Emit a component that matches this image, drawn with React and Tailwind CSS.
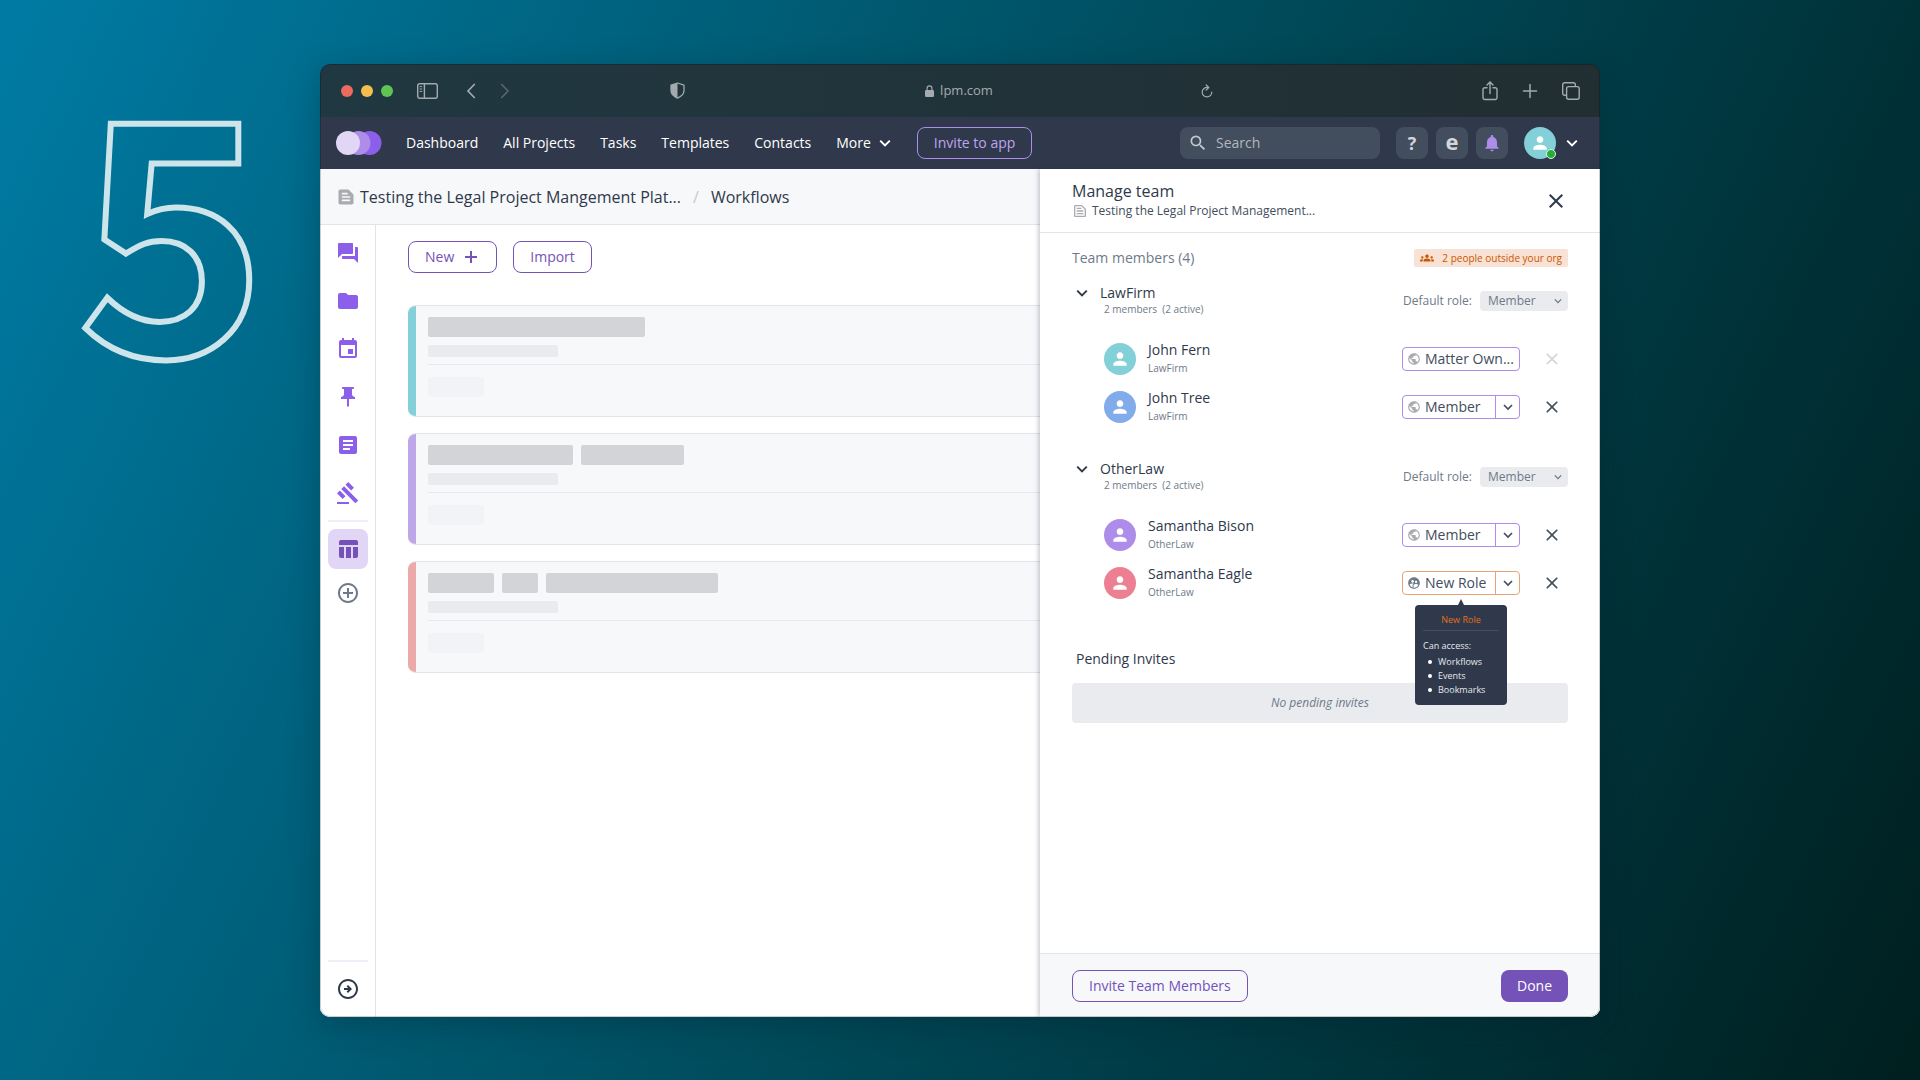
import React, { useState } from "react";
import {
  MdAddCircleOutline,
  MdArticle,
  MdClose,
  MdEvent,
  MdFolder,
  MdForum,
  MdGavel,
  MdGroups,
  MdNotifications,
  MdOutlineArrowCircleRight,
  MdOutlineTextSnippet,
  MdPerson,
  MdPublic,
  MdPushPin,
  MdSearch,
  MdSupervisedUserCircle,
  MdTableChart,
  MdTextSnippet,
} from "react-icons/md";

const navLinks = ["Dashboard", "All Projects", "Tasks", "Templates", "Contacts"];

const sideItems = [
  { name: "Messages", Icon: MdForum },
  { name: "Files", Icon: MdFolder },
  { name: "Events", Icon: MdEvent },
  { name: "Bookmarks", Icon: MdPushPin },
  { name: "Notes", Icon: MdArticle },
  { name: "Matters", Icon: MdGavel },
];

const cards = [
  { id: 1, accent: "bg-[#83d0d8]", bars: [217] },
  { id: 2, accent: "bg-[#bea7e8]", bars: [145, 103] },
  { id: 3, accent: "bg-[#eba9a9]", bars: [66, 36, 172] },
];

const groups = [
  {
    org: "LawFirm",
    members: [
      { name: "John Fern", color: "bg-[#83d0d8]", role: "Matter Own...", locked: true },
      { name: "John Tree", color: "bg-[#82abea]", role: "Member" },
    ],
  },
  {
    org: "OtherLaw",
    members: [
      { name: "Samantha Bison", color: "bg-[#ae8cea]", role: "Member" },
      { name: "Samantha Eagle", color: "bg-[#ed7f92]", role: "New Role", custom: true },
    ],
  },
];

const Chevron = ({ className, width = 2 }) => (
  <svg viewBox="0 0 12 12" className={className} fill="none" stroke="currentColor" strokeWidth={width} aria-hidden="true">
    <path d="M1.2 3.6 6 8.4l4.8-4.8" />
  </svg>
);

const TitleBar = () => (
  <div className="flex h-[53px] items-center bg-linear-to-r from-[#203841] to-[#212e32] px-5 text-[#a3abae]">
    <div className="flex gap-2 pl-px">
      <span className="size-3 rounded-full bg-[#ec6a5e]" />
      <span className="size-3 rounded-full bg-[#f4bf4f]" />
      <span className="size-3 rounded-full bg-[#61c554]" />
    </div>
    <svg viewBox="0 0 21 16" className="ml-6 h-4 w-[21px]" fill="none" stroke="currentColor" strokeWidth="1.4" aria-hidden="true">
      <rect x="0.7" y="0.7" width="19.6" height="14.6" rx="2" />
      <path d="M7.4.7v14.6" />
      <path d="M2.6 3.6h2.6M2.6 6h2.6M2.6 8.4h2.6" strokeWidth="1" />
    </svg>
    <svg viewBox="0 0 10 16" className="ml-7 h-4 w-2.5" fill="none" stroke="currentColor" strokeWidth="1.7" strokeLinecap="round" aria-hidden="true">
      <path d="M8.3 1.5 2 8l6.3 6.5" />
    </svg>
    <svg viewBox="0 0 10 16" className="ml-6 h-4 w-2.5 text-[#56656a]" fill="none" stroke="currentColor" strokeWidth="1.7" strokeLinecap="round" aria-hidden="true">
      <path d="M1.7 1.5 8 8l-6.3 6.5" />
    </svg>

    <div className="ml-40 flex w-[543px] items-center justify-between">
      <svg viewBox="0 0 15 17" className="h-[17px] w-[15px]" aria-hidden="true">
        <path d="M7.5 1 14 3.2v5.3c0 3.4-2.6 5.9-6.5 7.6C3.6 14.4 1 11.9 1 8.5V3.2z" fill="none" stroke="currentColor" strokeWidth="1.3" strokeLinejoin="round" />
        <path d="M7.5 1v15.1C3.6 14.4 1 11.9 1 8.5V3.2z" fill="currentColor" />
      </svg>
      <div className="flex items-center gap-1.5 pl-8 text-[13px]">
        <svg viewBox="0 0 9 12" className="h-3 w-[9px]" aria-hidden="true">
          <rect x="0" y="5" width="9" height="7" rx="1.2" fill="currentColor" />
          <path d="M2.1 5.5V3.3a2.4 2.4 0 0 1 4.8 0v2.2" fill="none" stroke="currentColor" strokeWidth="1.2" />
        </svg>
        lpm.com
      </div>
      <svg viewBox="0 0 12 14" className="h-3.5 w-3" fill="none" stroke="currentColor" strokeWidth="1.2" strokeLinecap="round" aria-hidden="true">
        <path d="M6.6 3.4A4.8 4.8 0 1 0 10.8 8.2" />
        <path d="M5.2 1l2.6 2.5L5.2 6" />
      </svg>
    </div>

    <div className="ml-auto flex items-center gap-6">
      <svg viewBox="0 0 16 20" className="h-5 w-4" fill="none" stroke="currentColor" strokeWidth="1.4" strokeLinecap="round" aria-hidden="true">
        <path d="M5 6.8H2.7A1.7 1.7 0 0 0 1 8.5v8.3a1.7 1.7 0 0 0 1.7 1.7h10.6a1.7 1.7 0 0 0 1.7-1.7V8.5a1.7 1.7 0 0 0-1.7-1.7H11" />
        <path d="M8 12.5V1.2M5 4l3-3 3 3" />
      </svg>
      <svg viewBox="0 0 16 16" className="size-4" fill="none" stroke="currentColor" strokeWidth="1.5" strokeLinecap="round" aria-hidden="true">
        <path d="M8 1.5v13M1.5 8h13" />
      </svg>
      <svg viewBox="0 0 18 18" className="size-[18px]" fill="none" stroke="currentColor" strokeWidth="1.4" aria-hidden="true">
        <rect x="4.6" y="4.6" width="12.6" height="12.6" rx="2" />
        <path d="M4.6 13.3H2.7a2 2 0 0 1-2-2V2.7a2 2 0 0 1 2-2h8.6a2 2 0 0 1 2 2v1.9" />
      </svg>
    </div>
  </div>
);

const NavBar = () => (
  <header className="flex h-[52px] items-center bg-[#2f394b] px-4 text-sm font-medium text-white">
    <svg viewBox="0 0 46 24" className="h-6 w-[46px]" aria-hidden="true">
      <circle cx="33.5" cy="12" r="12" fill="#8c5feb" />
      <circle cx="22.5" cy="12" r="12" fill="#ae8cea" />
      <circle cx="12" cy="12" r="12" fill="#e1d6f5" />
    </svg>
    <nav className="ml-6 flex items-center gap-[25px]">
      {navLinks.map((link) => (
        <a key={link} href="#">{link}</a>
      ))}
      <button className="flex items-center gap-2">
        More
        <Chevron className="size-3" />
      </button>
    </nav>
    <button className="ml-[26px] h-8 rounded-lg border border-[#ae8cea] px-4 text-[#bfa5ef]">Invite to app</button>

    <div className="ml-auto flex items-center gap-2">
      <label className="mr-2 flex h-8 w-[200px] items-center gap-2 rounded-lg bg-[#424d5d] px-2 text-[#c5c9ce]">
        <MdSearch size={20} className="shrink-0" />
        <input type="search" aria-label="Search" placeholder="Search" className="w-full bg-transparent font-normal outline-none placeholder:text-[#b3b8bf]" />
      </label>
      <button aria-label="Help" className="size-8 rounded-lg bg-[#424d5d] text-lg leading-none font-bold text-[#d3d5d9]">?</button>
      <button aria-label="Editor" className="size-8 rounded-lg bg-[#424d5d] pb-1 text-[22px] leading-none font-bold text-[#d3d5d9]">e</button>
      <button aria-label="Notifications" className="flex size-8 items-center justify-center rounded-lg bg-[#424d5d] text-[#ae8cea]">
        <MdNotifications size={20} />
      </button>
      <button aria-label="Account" className="ml-2 flex items-center gap-2.5 pr-1.5">
        <span className="relative flex size-8 items-center justify-center rounded-full bg-[#83d0d8]">
          <MdPerson size={20} />
          <span className="absolute right-0 bottom-0 size-2.5 rounded-full border border-[#dff2f2] bg-[#27ae34]" />
        </span>
        <Chevron className="size-3" />
      </button>
    </div>
  </header>
);

const SideBar = () => (
  <aside className="flex w-14 shrink-0 flex-col items-center border-r border-[#e1e4e9] bg-white pt-4 pb-4 text-[#8c5feb]">
    <div className="flex flex-col gap-6">
      {sideItems.map(({ name, Icon }) => (
        <a key={name} href="#" aria-label={name}>
          <Icon size={24} />
        </a>
      ))}
    </div>
    <hr className="mt-[15px] w-10 border-t-2 border-[#f0eff8]" />
    <a href="#" aria-label="Workflows" className="mt-[7px] flex size-10 items-center justify-center rounded-lg bg-[#e1d6f5] text-[#7452b8]">
      <MdTableChart size={24} />
    </a>
    <button aria-label="Add section" className="mt-3 text-[#6e7a89]">
      <MdAddCircleOutline size={24} />
    </button>
    <hr className="mt-auto w-10 border-t-2 border-[#f0eff8]" />
    <button aria-label="Expand menu" className="mt-[15px] text-[#2f394b]">
      <MdOutlineArrowCircleRight size={24} />
    </button>
  </aside>
);

const SkeletonCard = ({ accent, bars }) => (
  <article className="flex h-28 overflow-hidden rounded-l-lg border-y border-[#e1e4e9] bg-[#f7f8fa]">
    <div className={`-my-px w-2 ${accent}`} />
    <div className="flex-1 pt-[11px] pl-3">
      <div className="flex gap-2">
        {bars.map((w) => (
          <div key={w} className="h-5 rounded-xs bg-[#d3d4d8]" style={{ width: w }} />
        ))}
      </div>
      <div className="mt-2 h-3 w-[130px] rounded-xs bg-[#eaebef]" />
      <div className="mt-[7px] border-t border-[#e7e9ed]" />
      <div className="mt-3 h-5 w-14 rounded-sm bg-[#f2f3f7]" />
    </div>
  </article>
);

const access = ["Workflows", "Events", "Bookmarks"];

const RoleTooltip = () => (
  <div role="tooltip" className="absolute top-full left-3 z-10 mt-[11px] w-[92px] rounded-sm bg-[#2f394b] p-2 text-[9px] leading-[14px] text-[#e6e8ec]">
    <span className="absolute -top-1.5 left-1/2 -ml-1 border-x-4 border-b-8 border-x-transparent border-b-[#2f394b]" />
    <p className="border-b border-[#424d5d] pb-[3px] text-center text-[#e2701c]">New Role</p>
    <p className="mt-2">Can access:</p>
    <ul className="mt-0.5 pl-[5px]">
      {access.map((item) => (
        <li key={item} className="flex items-center gap-1.5 before:size-1 before:rounded-full before:bg-white">
          {item}
        </li>
      ))}
    </ul>
  </div>
);

const RolePicker = ({ member }) => {
  const [role, setRole] = useState(member.role);
  const border = member.custom ? "border-[#e8a474]" : "border-[#ae8cea]";

  if (member.locked) {
    return (
      <button className={`flex h-6 w-[118px] items-center gap-1 rounded border ${border} pl-1 text-sm font-medium whitespace-nowrap text-[#424d5d]`}>
        <MdPublic size={14} className="shrink-0 text-[#a9abaf]" />
        {member.role}
      </button>
    );
  }

  return (
    <div className={`relative flex h-6 w-[118px] items-center rounded border ${border} text-[#424d5d]`}>
      {member.custom ? (
        <MdSupervisedUserCircle size={14} className="ml-1 shrink-0 text-[#6e7a89]" />
      ) : (
        <MdPublic size={14} className="ml-1 shrink-0 text-[#a9abaf]" />
      )}
      <select
        aria-label={`Role of ${member.name}`}
        value={role}
        onChange={(e) => setRole(e.target.value)}
        className="h-full min-w-0 flex-1 appearance-none bg-transparent pl-1 text-sm font-medium outline-none"
      >
        <option>Member</option>
        <option>New Role</option>
      </select>
      <span className={`pointer-events-none flex h-full w-6 shrink-0 items-center justify-center border-l ${border}`}>
        <Chevron className="size-2.5" />
      </span>
      {member.custom && <RoleTooltip />}
    </div>
  );
};

const MemberRow = ({ member, org }) => (
  <li className="flex h-8 items-center">
    <span className={`flex size-8 items-center justify-center rounded-full text-white ${member.color}`}>
      <MdPerson size={20} />
    </span>
    <div className="ml-3">
      <p className="text-sm leading-5 font-medium">{member.name}</p>
      <p className="pb-0.5 text-[10px] leading-4 text-[#6e7a89]">{org}</p>
    </div>
    <div className="ml-auto flex items-center gap-[22px] pr-1.5">
      <RolePicker member={member} />
      <button aria-label={`Remove ${member.name}`} disabled={member.locked} className="text-[#424d5d] disabled:text-[#d3d4d8]">
        <MdClose size={20} />
      </button>
    </div>
  </li>
);

const OrgGroup = ({ org, members }) => {
  const id = `default-role-${org}`;
  return (
    <section>
      <div className="flex h-9 items-center">
        <button aria-label={`Collapse ${org}`} className="ml-1 self-start pt-1">
          <Chevron className="size-3" />
        </button>
        <div className="ml-3 self-start">
          <h3 className="text-sm leading-5 font-medium">{org}</h3>
          <p className="pl-1 text-[10px] leading-3 text-[#6e7a89]">2 members &nbsp;(2 active)</p>
        </div>
        <label htmlFor={id} className="ml-auto text-xs text-[#6e7a89]">Default role:</label>
        <span className="relative ml-2 h-5 w-[88px] text-[#6e7a89]">
          <select id={id} defaultValue="Member" className="block h-5 w-full appearance-none rounded bg-[#eaebef] pl-2 text-xs font-medium">
            <option>Member</option>
          </select>
          <Chevron className="pointer-events-none absolute top-1.5 right-1.5 size-2" />
        </span>
      </div>
      <ul className="mt-6 flex flex-col gap-4 pl-8">
        {members.map((m) => (
          <MemberRow key={m.name} member={m} org={org} />
        ))}
      </ul>
    </section>
  );
};

const TeamPanel = () => (
  <aside className="flex w-[560px] shrink-0 flex-col bg-white text-[#2f394b] shadow-[-1px_0_5px_rgba(30,40,60,0.3)]">
    <div className="flex h-16 items-center border-b border-[#e1e4e9] px-8">
      <div className="pb-1">
        <h2 className="text-base leading-6 font-medium">Manage team</h2>
        <p className="flex items-center gap-1 text-xs leading-4 text-[#424d5d]">
          <MdOutlineTextSnippet size={16} className="text-[#a9abaf]" />
          Testing the Legal Project Management...
        </p>
      </div>
      <button aria-label="Close" className="ml-auto text-[#2f394b]">
        <MdClose size={24} />
      </button>
    </div>

    <div className="flex-1 px-8 pt-4">
      <div className="flex items-center justify-between">
        <h3 className="text-sm leading-[18px] font-medium text-[#6e7a89]">Team members (4)</h3>
        <p className="flex h-[18px] items-center gap-2 rounded-xs bg-[#f7e2d5] px-1.5 text-[10px] font-medium text-[#cc5500]">
          <MdGroups size={14} />
          2 people outside your org
        </p>
      </div>

      <div className="mt-4 flex flex-col gap-9">
        {groups.map((g) => (
          <OrgGroup key={g.org} {...g} />
        ))}
      </div>

      <h3 className="mt-[50px] pl-1 text-sm leading-5 font-medium">Pending Invites</h3>
      <p className="mt-3.5 rounded bg-[#eaebef] text-center text-xs leading-10 font-medium text-[#6e7a89] italic">No pending invites</p>
    </div>

    <div className="flex h-16 items-center justify-between border-t border-[#e1e4e9] bg-[#f7f8fa] px-8 text-sm font-medium">
      <button className="h-8 rounded-lg border border-[#7452b8] px-4 text-[#7452b8]">Invite Team Members</button>
      <button className="h-8 rounded-lg bg-[#7452b8] px-4 text-white">Done</button>
    </div>
  </aside>
);

const App = () => (
  <main className="grid min-h-screen grid-cols-[1fr_4fr_1fr] bg-linear-115 from-[#007ba4] via-[#004d5e] to-[#001f1f] font-['Open_Sans',sans-serif]">
    <div className="flex justify-center pt-4 pl-6">
      <span className="font-['Noto_Sans_CJK_SC',sans-serif] text-[322px] leading-[400px] font-bold text-transparent [-webkit-text-stroke:6px_#cde5ea]">5</span>
    </div>

    <div className="relative mt-16 mb-[63px] flex flex-col overflow-hidden rounded-[10px] shadow-[0_8px_32px_rgba(0,30,40,0.3)] after:pointer-events-none after:absolute after:inset-0 after:rounded-[10px] after:border after:border-black/20">
      <TitleBar />
      <NavBar />
      <div className="flex flex-1 bg-white">
        <div className="flex min-w-0 flex-1 flex-col">
          <div className="flex h-14 items-center border-b border-[#e1e4e9] bg-[#f7f8fa] pl-4 text-base text-[#2f394b]">
            <MdTextSnippet size={20} className="text-[#a9abaf]" />
            <a href="#" className="ml-1">Testing the Legal Project Mangement Plat...</a>
            <span className="mx-3 text-[#c5c9ce]">/</span>
            <a href="#">Workflows</a>
          </div>
          <div className="flex flex-1">
            <SideBar />
            <div className="min-w-0 flex-1 pt-4 pl-8">
              <div className="flex gap-4 text-sm font-medium text-[#7452b8]">
                <button className="flex h-8 items-center gap-2 rounded-lg border border-[#7452b8] px-4">
                  New
                  <svg viewBox="0 0 18 18" className="size-[18px]" stroke="currentColor" strokeWidth="2" aria-hidden="true">
                    <path d="M9 3v12M3 9h12" />
                  </svg>
                </button>
                <button className="h-8 rounded-lg border border-[#7452b8] px-4">Import</button>
              </div>
              <div className="mt-8 flex flex-col gap-4">
                {cards.map((card) => (
                  <SkeletonCard key={card.id} {...card} />
                ))}
              </div>
            </div>
          </div>
        </div>
        <TeamPanel />
      </div>
    </div>
  </main>
);

export default App;
